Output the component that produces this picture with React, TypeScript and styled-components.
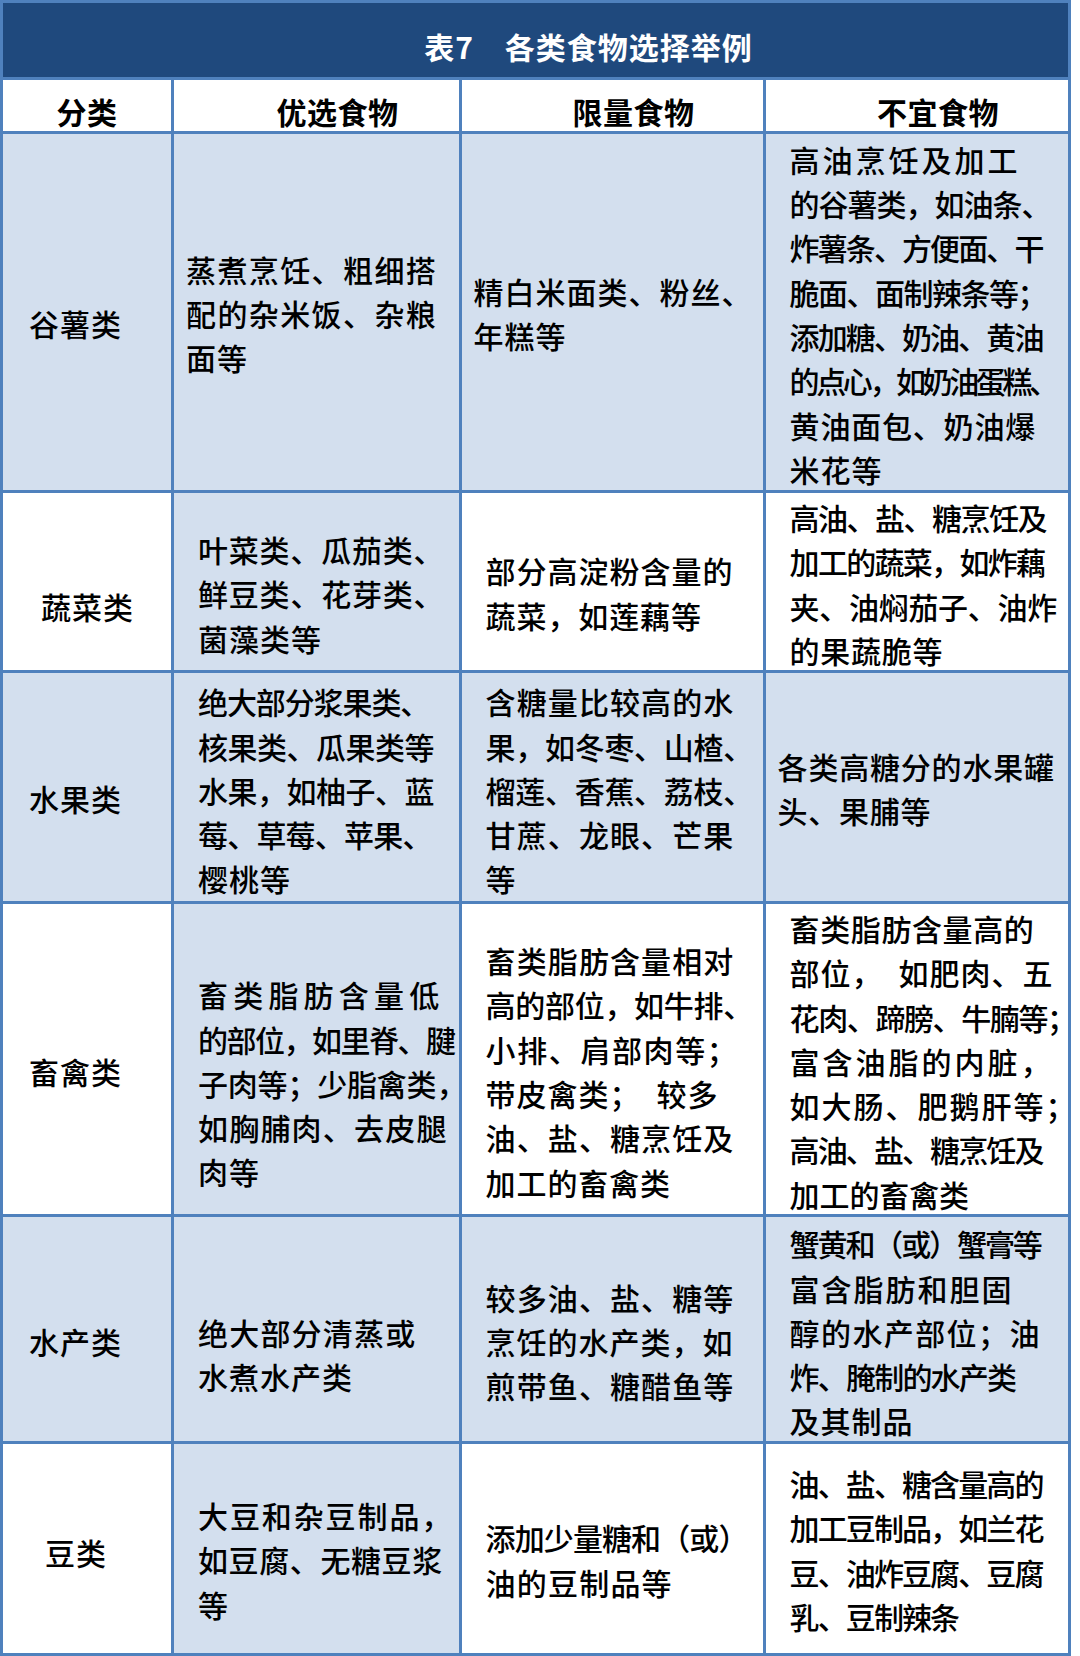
import React from "react";
import styled, { createGlobalStyle } from "styled-components";

const FONT = 30;

const GlobalStyle = createGlobalStyle`
  html, body {
    margin: 0;
    padding: 0;
    background: #ffffff;
  }
  body {
    font-family: "Noto Sans CJK SC", "Noto Sans", sans-serif;
    color: #000000;
  }
`;

const Table = styled.div`
  box-sizing: border-box;
  width: 1071px;
  display: grid;
  grid-template-columns: 168px 285px 301px 302px;
  grid-template-rows: 74px 51px 356px 177px 228px 310px 224px 209px;
  gap: 3px;
  padding: 3px;
  background: #4f81bd;
`;

const TitleBar = styled.div`
  grid-column: 1 / -1;
  background: #1f497d;
  color: #ffffff;
  font-weight: 700;
  font-size: ${FONT}px;
  letter-spacing: 1px;
  line-height: 40px;
  box-sizing: border-box;
  padding: 23px 0 0 106px;
  text-align: center;
  white-space: pre;
`;

const HeadCell = styled.div<{ $pl: number }>`
  background: #ffffff;
  font-weight: 700;
  font-size: ${FONT}px;
  letter-spacing: 0.5px;
  line-height: 36px;
  box-sizing: border-box;
  padding: 13px 0 0 ${(p) => p.$pl}px;
  text-align: center;
  white-space: nowrap;
`;

const Cell = styled.div<{ $shade: boolean; $pl: number; $shift: number }>`
  background: ${(p) => (p.$shade ? "#d3dfee" : "#ffffff")};
  box-sizing: border-box;
  display: flex;
  flex-direction: column;
  justify-content: center;
  align-items: flex-start;
  padding-left: ${(p) => p.$pl}px;
  padding-top: ${(p) => Math.max(0, p.$shift * 2)}px;
  padding-bottom: ${(p) => Math.max(0, -p.$shift * 2)}px;
  font-size: ${FONT}px;
  font-weight: 500;
  line-height: 44.3px;
`;

const Line = styled.span<{ $adv: number }>`
  display: block;
  white-space: pre;
  letter-spacing: ${(p) => (p.$adv - FONT).toFixed(2)}px;
`;

type L = [string, number];
type CellData = { pl: number; shift: number; lines: L[] };
type RowData = { shade: boolean; cat: CellData; cells: CellData[] };

const rows: RowData[] = [
  {
    shade: true,
    cat: { pl: 26, shift: 11, lines: [["谷薯类", 31]] },
    cells: [
      {
        pl: 12,
        shift: 1,
        lines: [
          ["蒸煮烹饪、粗细搭", 31.4],
          ["配的杂米饭、杂粮", 31.4],
          ["面等", 31],
        ],
      },
      {
        pl: 11.5,
        shift: 1,
        lines: [
          ["精白米面类、粉丝、", 31],
          ["年糕等", 31],
        ],
      },
      {
        pl: 23.6,
        shift: 2,
        lines: [
          ["高油烹饪及加工", 33],
          ["的谷薯类，如油条、", 29],
          ["炸薯条、方便面、干", 28.1],
          ["脆面、面制辣条等；", 28.5],
          ["添加糖、奶油、黄油", 28.1],
          ["的点心，如奶油蛋糕、", 26.6],
          ["黄油面包、奶油爆", 30.8],
          ["米花等", 31],
        ],
      },
    ],
  },
  {
    shade: false,
    cat: { pl: 38, shift: 25, lines: [["蔬菜类", 31]] },
    cells: [
      {
        pl: 24,
        shift: 12,
        lines: [
          ["叶菜类、瓜茄类、", 30.8],
          ["鲜豆类、花芽类、", 30.8],
          ["菌藻类等", 31],
        ],
      },
      {
        pl: 23.6,
        shift: 11,
        lines: [
          ["部分高淀粉含量的", 31],
          ["蔬菜，如莲藕等", 30.9],
        ],
      },
      {
        pl: 23.6,
        shift: 2,
        lines: [
          ["高油、盐、糖烹饪及", 28.5],
          ["加工的蔬菜，如炸藕", 28.3],
          ["夹、油焖茄子、油炸", 29.7],
          ["的果蔬脆等", 30.7],
        ],
      },
    ],
  },
  {
    shade: true,
    cat: { pl: 26, shift: 11, lines: [["水果类", 31]] },
    cells: [
      {
        pl: 24,
        shift: 3,
        lines: [
          ["绝大部分浆果类、", 28.9],
          ["核果类、瓜果类等", 29.5],
          ["水果，如柚子、蓝", 29.5],
          ["莓、草莓、苹果、", 29.2],
          ["樱桃等", 31],
        ],
      },
      {
        pl: 23.6,
        shift: 3,
        lines: [
          ["含糖量比较高的水", 31.1],
          ["果，如冬枣、山楂、", 29.7],
          ["榴莲、香蕉、荔枝、", 29.7],
          ["甘蔗、龙眼、芒果", 31.1],
          ["等", 31],
        ],
      },
      {
        pl: 11.6,
        shift: 1,
        lines: [
          ["各类高糖分的水果罐", 30.8],
          ["头、果脯等", 30.7],
        ],
      },
    ],
  },
  {
    shade: false,
    cat: { pl: 26, shift: 12, lines: [["畜禽类", 31]] },
    cells: [
      {
        pl: 24,
        shift: 24,
        lines: [
          ["畜类脂肪含量低", 35.2],
          ["的部位，如里脊、腱", 28.5],
          ["子肉等；少脂禽类，", 29.8],
          ["如胸脯肉、去皮腿", 31.2],
          ["肉等", 31],
        ],
      },
      {
        pl: 23.6,
        shift: 12,
        lines: [
          ["畜类脂肪含量相对", 31.1],
          ["高的部位，如牛排、", 29.7],
          ["小排、肩部肉等；", 31.6],
          ["带皮禽类；\u2002较多", 31],
          ["油、盐、糖烹饪及", 31.1],
          ["加工的畜禽类", 30.9],
        ],
      },
      {
        pl: 23.6,
        shift: 2,
        lines: [
          ["畜类脂肪含量高的", 30.6],
          ["部位，\u2002如肥肉、五", 31],
          ["花肉、蹄膀、牛腩等；", 28.6],
          ["富含油脂的内脏，", 33],
          ["如大肠、肥鹅肝等；", 32],
          ["高油、盐、糖烹饪及", 28.1],
          ["加工的畜禽类", 29.9],
        ],
      },
    ],
  },
  {
    shade: true,
    cat: { pl: 26, shift: 12, lines: [["水产类", 31]] },
    cells: [
      {
        pl: 24,
        shift: 25,
        lines: [
          ["绝大部分清蒸或", 31.2],
          ["水煮水产类", 31],
        ],
      },
      {
        pl: 23.6,
        shift: 12,
        lines: [
          ["较多油、盐、糖等", 31.1],
          ["烹饪的水产类，如", 31],
          ["煎带鱼、糖醋鱼等", 31.1],
        ],
      },
      {
        pl: 23.6,
        shift: 3,
        lines: [
          ["蟹黄和（或）蟹膏等", 27.9],
          ["富含脂肪和胆固", 32],
          ["醇的水产部位；油", 31.4],
          ["炸、腌制的水产类", 28.2],
          ["及其制品", 31],
        ],
      },
    ],
  },
  {
    shade: false,
    cat: { pl: 42, shift: 4, lines: [["豆类", 31]] },
    cells: [
      {
        pl: 24,
        shift: 11,
        lines: [
          ["大豆和杂豆制品，", 31.9],
          ["如豆腐、无糖豆浆", 30.6],
          ["等", 31],
        ],
      },
      {
        pl: 23.6,
        shift: 11,
        lines: [
          ["添加少量糖和（或）", 29.1],
          ["油的豆制品等", 31.2],
        ],
      },
      {
        pl: 23.6,
        shift: 1,
        lines: [
          ["油、盐、糖含量高的", 28.1],
          ["加工豆制品，如兰花", 28.1],
          ["豆、油炸豆腐、豆腐", 28.1],
          ["乳、豆制辣条", 28.1],
        ],
      },
    ],
  },
];

const headers: { text: string; pl: number }[] = [
  { text: "分类", pl: 0 },
  { text: "优选食物", pl: 42 },
  { text: "限量食物", pl: 42 },
  { text: "不宜食物", pl: 42 },
];

function BodyCell({ data, shade }: { data: CellData; shade: boolean }) {
  return (
    <Cell $shade={shade} $pl={data.pl} $shift={data.shift}>
      {data.lines.map(([t, adv], i) => (
        <Line key={i} $adv={adv}>
          {t}
        </Line>
      ))}
    </Cell>
  );
}

export default function App() {
  return (
    <>
      <GlobalStyle />
      <Table>
        <TitleBar>表7　各类食物选择举例</TitleBar>
        {headers.map((h) => (
          <HeadCell key={h.text} $pl={h.pl}>
            {h.text}
          </HeadCell>
        ))}
        {rows.map((r, ri) => (
          <React.Fragment key={ri}>
            <BodyCell data={r.cat} shade={r.shade} />
            {r.cells.map((c, ci) => (
              <BodyCell key={ci} data={c} shade={r.shade || ci === 0} />
            ))}
          </React.Fragment>
        ))}
      </Table>
    </>
  );
}
